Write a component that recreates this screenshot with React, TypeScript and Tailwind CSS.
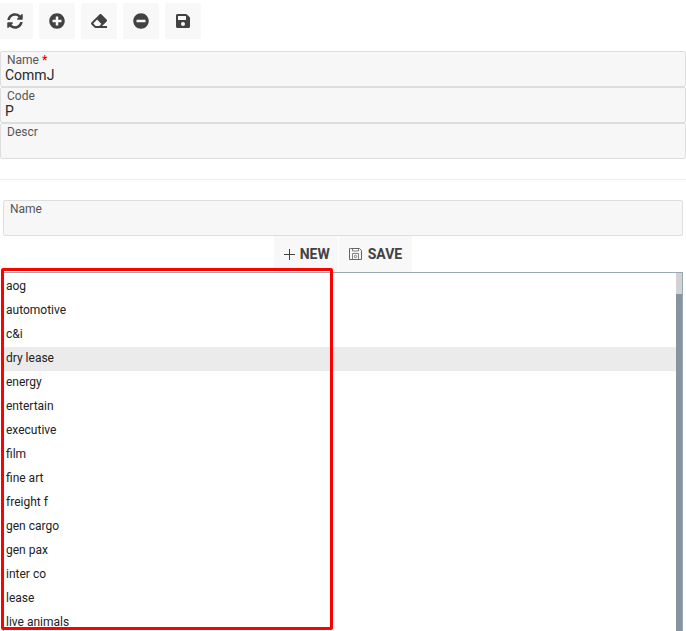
import React, { useState } from 'react'
import { FaEraser, FaMinusCircle, FaPlusCircle, FaSave, FaSyncAlt } from 'react-icons/fa'

const toolbar = [
  { label: 'Refresh', Icon: FaSyncAlt },
  { label: 'Add', Icon: FaPlusCircle },
  { label: 'Clear', Icon: FaEraser },
  { label: 'Remove', Icon: FaMinusCircle },
  { label: 'Save record', Icon: FaSave },
]

const items = [
  'aog',
  'automotive',
  'c&i',
  'dry lease',
  'energy',
  'entertain',
  'executive',
  'film',
  'fine art',
  'freight f',
  'gen cargo',
  'gen pax',
  'inter co',
  'lease',
  'live animals',
]

interface FieldProps {
  id: string
  label: string
  required?: boolean
  initial?: string
}

function Field({ id, label, required, initial = '' }: FieldProps) {
  const [value, setValue] = useState(initial)

  return (
    <div className="flex h-9 flex-col rounded-xs border border-[#dedede] bg-[#f7f7f7] px-1">
      <label htmlFor={id} className="h-4 px-0.5 text-xs leading-4 text-[#555]">
        {label}
        {required && <span className="font-bold text-[#f00]"> *</span>}
      </label>
      <input
        id={id}
        value={value}
        onChange={(e) => setValue(e.target.value)}
        className="h-3.5 w-full bg-transparent text-sm leading-3.5 text-[#2a2a2a] outline-none"
      />
    </div>
  )
}

function PlusIcon() {
  return (
    <svg width="14" height="14" viewBox="0 0 14 14" fill="none" stroke="currentColor" aria-hidden="true">
      <path d="M7.5 2v11M2 7.5h11" />
    </svg>
  )
}

function DiskIcon() {
  return (
    <svg width="14" height="14" viewBox="0 0 14 14" fill="none" stroke="#666" aria-hidden="true">
      <path d="M1.5 1.5h9l2 2v9h-12v-11z" strokeLinejoin="round" />
      <path d="M3.5 1.5v2.5h6v-2.5M3.5 12.5v-6h6v6" strokeWidth="0.8" />
      <circle cx="6.5" cy="9.5" r="1.2" strokeWidth="0.8" />
    </svg>
  )
}

function App() {
  const [selected, setSelected] = useState('dry lease')

  return (
    <main className="flex h-screen flex-col overflow-hidden bg-white font-[Roboto,sans-serif] text-[#424242]">
      <div className="-ml-[3px] flex gap-1.5 pt-[3px] pb-3">
        {toolbar.map(({ label, Icon }) => (
          <button
            key={label}
            type="button"
            aria-label={label}
            className="flex size-9 items-center justify-center rounded-xs bg-[#f8f8f8] hover:bg-[#eee]"
          >
            <Icon size={16} />
          </button>
        ))}
      </div>

      <form>
        <Field id="name" label="Name" required initial="CommJ" />
        <Field id="code" label="Code" initial="P" />
        <Field id="descr" label="Descr" />
      </form>

      <hr className="my-5 border-[#eee]" />

      <section className="flex min-h-0 flex-1 flex-col px-[3px]">
        <Field id="item-name" label="Name" />

        <div className="flex justify-center gap-px">
          <button type="button" className="flex h-9 items-center gap-1 bg-[#f8f8f8] px-2 text-sm font-bold">
            <PlusIcon />
            NEW
          </button>
          <button type="button" className="flex h-9 items-center gap-[5px] bg-[#f8f8f8] px-2.5 text-sm font-bold">
            <DiskIcon />
            SAVE
          </button>
        </div>

        <div className="relative flex min-h-0 flex-1 border border-b-0 border-[#98a8b0]">
          <ul className="flex-1 overflow-hidden pt-0.5">
            {items.map((item) => (
              <li key={item}>
                <button
                  type="button"
                  onClick={() => setSelected(item)}
                  className={`block h-6 w-full px-0.5 text-left text-xs text-[#222] ${selected === item ? 'bg-[#ebebeb]' : ''}`}
                >
                  <span className="block pb-0.5 leading-5">{item}</span>
                </button>
              </li>
            ))}
          </ul>
          {/* Scrollbar */}
          <div className="w-1.5 bg-[#87949d]">
            <div className="h-[21px] bg-[#d2d2d2]" />
          </div>
          {/* Highlight frame around the list names */}
          <div className="pointer-events-none absolute -top-[5px] bottom-px -left-[3px] w-[332px] rounded-xs border-3 border-[#f00]" />
        </div>
      </section>
    </main>
  )
}

export default App
